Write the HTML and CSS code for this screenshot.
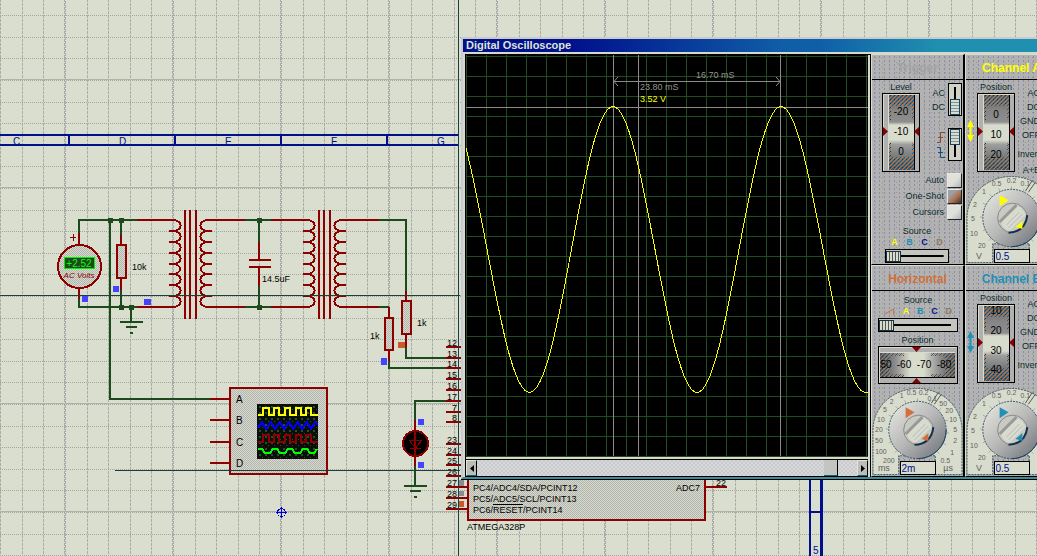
FILE: index.html
```html
<!DOCTYPE html>
<html lang="en">

<head>
    <meta charset="UTF-8">
    <meta name="viewport" content="width=device-width, initial-scale=1.0">
    <title>Digital Oscilloscope</title>
    <link rel="stylesheet" href="styles.css">
</head>

<body>
    <main class="workspace">
        <svg class="schematic" role="img" aria-label="Circuit schematic">
            <defs>
                <pattern id="sheetGrid" x="64" y="79" width="108" height="108" patternUnits="userSpaceOnUse">
                    <g class="grid-v">
                        <path d="M.5 0V108M23.5 0V108M44.5 0V108M66.5 0V108M87.5 0V108" />
                        <path d="M1.5 2V108" />
                    </g>
                    <path class="grid-solid" d="M0 .5H108" />
                    <path class="grid-h" d="M0 1.5H108M0 23.5H108M0 44.5H108M0 66.5H108M0 87.5H108" />
                </pattern>
                <pattern id="dither" width="2" height="2" patternUnits="userSpaceOnUse">
                    <rect width="2" height="2" fill="#d6dacb" />
                    <path d="M0 0h1v1h-1zM1 1h1v1h-1z" fill="#b4b4b0" />
                </pattern>
                <pattern id="smallGrid" x="257" y="404" width="6" height="6" patternUnits="userSpaceOnUse">
                    <rect width="6" height="6" fill="#0a0f0a" />
                    <path d="M2 2h2v2h-2zM5 5h1v1h-1z" fill="#245224" />
                </pattern>
                <g id="transformer">
                    <path class="pin" d="M137 220H173a7 5 0 0 1 0 11h-4m4 0a7 5 0 0 1 0 11h-4m4 0a7 5 0 0 1 0 11h-4m4 0a7 5 0 0 1 0 11h-4m4 0a7 5 0 0 1 0 10h-4m4 0a7 5 0 0 1 0 11h-4m4 0a7 5 0 0 1 0 11h-4m4 0a7 5 0 0 1 0 11H137" />
                    <path class="pin" d="M245 220H208a7 5 0 0 0 0 11h4m-4 0a7 5 0 0 0 0 11h4m-4 0a7 5 0 0 0 0 11h4m-4 0a7 5 0 0 0 0 11h4m-4 0a7 5 0 0 0 0 10h4m-4 0a7 5 0 0 0 0 11h4m-4 0a7 5 0 0 0 0 11h4m-4 0a7 5 0 0 0 0 11H245" />
                    <path class="pin" d="M185 210V319M190 210V319M196 210V319" />
                </g>
                <g id="ground">
                    <path class="wire" d="M0 0V15M-11 15H12M-5 20H6M-1 26H2" />
                </g>
            </defs>

            <rect width="100%" height="100%" fill="url(#sheetGrid)" />

            <!-- sheet border -->
            <path class="border" d="M0 135H459M0 145H459M69 135V145M175 135V145M281 135V145M387 135V145" />
            <path class="border" d="M810 470V556M810 512H821" />
            <path class="border thick" d="M821.5 470V556" />
            <g class="border-text">
                <text x="13" y="145">C</text>
                <text x="119" y="145">D</text>
                <text x="225" y="145">E</text>
                <text x="331" y="145">F</text>
                <text x="437" y="145">G</text>
                <text x="813" y="554">5</text>
            </g>

            <!-- wires -->
            <path class="wire" d="M79 234V220H137M110 220V399H210M121 220V236M121 290V307M79 299V307H137" />
            <path class="wire" d="M245 220H271M245 307H271M259 220V242M259 286V307" />
            <path class="wire" d="M379 220H406V292M406 347V358H446M379 307H389M389 361V368H446" />
            <path class="wire" d="M446 401H415V420M415 466V472" />
            <use href="#ground" x="131" y="307" />
            <use href="#ground" x="415" y="471" />
            <path class="node" d="M108 218h5v5h-5zM119 218h5v5h-5zM119 305h5v5h-5zM129 305h5v5h-5zM257 218h5v5h-5zM257 305h5v5h-5z" />

            <!-- transformers -->
            <use href="#transformer" />
            <use href="#transformer" x="134" />

            <!-- AC voltmeter -->
            <path class="pin" d="M79 233V245M79 288V299" />
            <path class="thin-pin" d="M70 237.5H76M73.5 234V241" />
            <circle class="part" cx="79.5" cy="266.5" r="21.5" />
            <rect class="meter-screen" x="64.5" y="257.5" width="30" height="11" />
            <text class="meter-value" x="79" y="267">+2.52</text>
            <text class="meter-unit" x="79" y="278">AC Volts</text>

            <!-- resistors and capacitor -->
            <path class="pin" d="M121 235V245M121 278V290M406 291V301M406 334V347M389 307V318M389 350V361" />
            <rect class="part" x="117" y="245" width="9" height="33" />
            <rect class="part" x="402" y="301" width="9" height="33" />
            <rect class="part" x="385" y="318" width="8" height="32" />
            <path class="pin" d="M259 242V260M249 260H271M249 267H271M259 267V286" />
            <g class="label">
                <text x="132" y="270">10k</text>
                <text x="262" y="282">14.5uF</text>
                <text x="370" y="339">1k</text>
                <text x="417" y="326">1k</text>
            </g>

            <!-- oscilloscope part -->
            <rect class="part" x="230" y="388" width="97" height="86" />
            <path class="pin" d="M210 399H230M210 420H230M210 442H230M210 463H230" />
            <rect x="257" y="404" width="61" height="55" fill="url(#smallGrid)" />
            <path class="trace yellow" d="M258 415H263V408H269V415H274V408H279V415H285V408H290V415H296V408H301V415H306V408H311V415H318" />
            <path class="trace blue" d="M258 428L262 422L266 429L271 422L275 429L280 422L284 429L289 422L293 429L298 422L302 429L307 422L311 429L315 422L318 425" />
            <path class="trace red" d="M258 442H263V435H269V442H274V435H279V442H285V435H290V442H296V435H301V442H306V435H311V442H318" />
            <path class="trace green" d="M258 449L262 449L265 453L270 453L273 449L277 449L280 453L285 453L288 449L292 449L295 453L300 453L303 449L307 449L310 453L314 453L317 449" />
            <g class="label pin-name">
                <text x="236" y="403">A</text>
                <text x="236" y="424">B</text>
                <text x="236" y="446">C</text>
                <text x="236" y="467">D</text>
            </g>

            <!-- LED -->
            <circle class="led" cx="415.5" cy="443.5" r="12.5" />
            <path class="pin" d="M415 420V466" />
            <path class="led-mark" d="M409 440H422L415.5 448ZM410 448.5H421" />

            <!-- microcontroller -->
            <rect class="part" x="468" y="340" width="237" height="180" />
            <path class="pin" d="M446 347H468M446 358H468M446 368H468M446 379H468M446 390H468M446 401H468M446 412H468M446 422H468M446 444H468M446 455H468M446 465H468M446 476H468M446 487H468M446 498H468M446 509H468M705 487H727" />
            <g class="label pin-number">
                <text x="457" y="346">12</text>
                <text x="457" y="357">13</text>
                <text x="457" y="367">14</text>
                <text x="457" y="378">15</text>
                <text x="457" y="389">16</text>
                <text x="457" y="400">17</text>
                <text x="457" y="411">7</text>
                <text x="457" y="421">8</text>
                <text x="457" y="443">23</text>
                <text x="457" y="454">24</text>
                <text x="457" y="464">25</text>
                <text x="457" y="475">26</text>
                <text x="457" y="486">27</text>
                <text x="457" y="497">28</text>
                <text x="457" y="508">29</text>
                <text x="726" y="486">22</text>
            </g>
            <g class="label">
                <text x="473" y="491">PC4/ADC4/SDA/PCINT12</text>
                <text x="473" y="502">PC5/ADC5/SCL/PCINT13</text>
                <text x="473" y="513">PC6/RESET/PCINT14</text>
                <text x="676" y="491">ADC7</text>
                <text x="467" y="530">ATMEGA328P</text>
            </g>
            <path class="overline" d="M493 504.5H523" />

            <!-- logic state markers -->
            <path class="state-low" d="M113 286h6v6h-6zM82 296h6v6h-6zM144 299h7v6h-7zM381 358h6v7h-6zM418 419h6v6h-6zM418 462h6v6h-6z" />
            <path class="state-high" d="M398 342h7v6h-7zM459 501h5v6h-5z" />
            <path class="state-float" d="M459 480h5v6h-5zM459 491h5v5h-5z" />

            <!-- origin -->
            <g class="origin">
                <circle cx="281.5" cy="512.5" r="4" />
                <path d="M276 512.5H287M281.5 507V518" />
            </g>

            <!-- cursor crosshair -->
            <path class="crosshair" d="M0 295.5H460M115 470.5H460M458.5 0V556" />
        </svg>

        <section class="window">
            <h1 class="title-bar">Digital Oscilloscope</h1>
            <div class="window-body">
                <div class="scope">
                    <svg class="screen" role="img" aria-label="Waveform display">
                        <defs>
                            <pattern id="scopeGrid" width="20" height="20" patternUnits="userSpaceOnUse">
                                <path d="M.5 0V20M0 1.5H20" stroke="#1f4d1f" />
                            </pattern>
                        </defs>
                        <rect width="100%" height="100%" fill="url(#scopeGrid)" />
                        <path class="cursor" d="M147.5 0V402M172.5 0V402M314.5 0V402M0 52.5H402M148 26.5H314M152 22L148 26.5L152 31M310 22L314 26.5L310 31" />
                        <path class="wave" d="M-21 51.5C9.6 51.5 32.4 337.5 63.5 337.5S116.4 51.5 147 51.5S200.4 337.5 231 337.5S284.4 51.5 315 51.5S368.4 337.5 399.5 337.5S452 51.5 483 51.5" />
                        <text class="reading" x="230" y="23">16.70 mS</text>
                        <text class="reading" x="174" y="35">23.80 mS</text>
                        <text class="reading volts" x="174" y="47">3.52 V</text>
                    </svg>
                    <div class="scrollbar">
                        <button type="button" aria-label="Scroll left"><svg viewBox="0 0 4 7"><path d="M4 0V7L0 3.5Z" /></svg></button>
                        <div class="track"><span class="thumb"></span></div>
                        <button type="button" aria-label="Scroll right"><svg viewBox="0 0 4 7"><path d="M0 0V7L4 3.5Z" /></svg></button>
                    </div>
                </div>

                <svg class="shared" aria-hidden="true">
                    <defs>
                        <linearGradient id="drumV" x2="0" y2="1">
                            <stop offset="0" stop-color="#555f62" />
                            <stop offset=".2" stop-color="#858585" />
                            <stop offset=".36" stop-color="#8e8e8e" />
                            <stop offset=".4" stop-color="#d8dccd" />
                            <stop offset=".6" stop-color="#d8dccd" />
                            <stop offset=".66" stop-color="#9e9e9e" />
                            <stop offset="1" stop-color="#4b5558" />
                        </linearGradient>
                        <linearGradient id="drumH">
                            <stop offset="0" stop-color="#4b5558" />
                            <stop offset=".2" stop-color="#8b8b8b" />
                            <stop offset=".4" stop-color="#d8dccd" />
                            <stop offset=".58" stop-color="#d8dccd" />
                            <stop offset=".8" stop-color="#8b8b8b" />
                            <stop offset="1" stop-color="#4b5558" />
                        </linearGradient>
                        <linearGradient id="knob" x2="1" y2="1">
                            <stop offset=".1" stop-color="#e0e2da" />
                            <stop offset=".5" stop-color="#b8b8b8" />
                            <stop offset=".9" stop-color="#777b80" />
                        </linearGradient>
                        <pattern id="speckle" width="4" height="4" patternUnits="userSpaceOnUse">
                            <path d="M0 0h1v1h-1zM2 2h1v1h-1zM3 1h1v1h-1zM1 3h1v1h-1z" fill="#c8703c" />
                            <path d="M1 1h1v1h-1zM3 3h1v1h-1zM2 0h1v1h-1z" fill="#14609c" />
                            <path d="M0 2h1v1h-1z" fill="#1c3c24" />
                        </pattern>
                        <symbol id="drum" viewBox="0 0 38 79">
                            <rect class="drum-frame" x=".5" y=".5" width="37" height="78" />
                            <path d="M1.5 78V1.5H37M6.500 2V77" fill="none" stroke="#d8dccd" />
                            <rect x="7" y="2" width="25" height="75" fill="url(#drumV)" />
                            <path d="M7 2h25v11h-25zM7 64h25v13h-25zM7 13h2v14h-2zM7 50h2v14h-2zM30 13h2v14h-2zM30 50h2v14h-2z" fill="url(#speckle)" />
                            <path d="M32.5 2V77" stroke="#000" />
                            <path d="M1 34V43L6 38.5ZM37 34V43L32 38.5Z" fill="#880000" />
                        </symbol>
                        <symbol id="knobBase" viewBox="0 0 92 90">
                            <path d="M1 89V44a45 42 0 0 1 90 0V89H64V70H27V89Z" fill="#d8dccd" stroke="#3e5e5e" stroke-dasharray="2 1" />
                            <path d="M46 43L33 14M46 43L24 20M46 43L17 29M46 43L14 43M46 43L17 57M46 43L23 67M46 43V12M46 43L59 14M46 43L70 22M46 43L77 34M46 43L78 47M46 43L75 59M46 43L68 68" stroke="#aaa" />
                            <path d="M60 17L67 6M63 18L70 8" stroke="#555" />
                            <circle cx="46" cy="44" r="29" fill="url(#knob)" stroke="#3f5363" stroke-dasharray="2 1" />
                            <path d="M46 73A29 29 0 0 0 75 44" fill="none" stroke="#17425a" />
                            <circle cx="47" cy="44" r="15" fill="#c8cac4" stroke="#888" />
                            <path d="M35 46L49 31Q57 33 60 41L44 57Q36 54 35 46Z" fill="#d8dccd" />
                            <path d="M34 48L51 31" stroke="#999" stroke-width="3" />
                            <path d="M41 51L54 38M43 54L57 40" stroke="#b4b4c8" />
                            <path d="M43 59Q60 58 62 41" fill="none" stroke="#14314a" stroke-width="2" />
                            <path d="M34 21L43 26L34 32Z" fill="currentColor" />
                            <path d="M57 47V55L50 53Z" fill="currentColor" />
                        </symbol>
                        <symbol id="voltDial" viewBox="0 0 92 90">
                            <use href="#knobBase" width="92" height="90" />
                            <g class="dial-text">
                                <text x="31" y="12">0.5</text>
                                <text x="46" y="9">0.2</text>
                                <text x="60" y="12">0.1</text>
                                <text x="18" y="20">1</text>
                                <text x="9" y="33">2</text>
                                <text x="7" y="47">5</text>
                                <text x="8" y="62">10</text>
                                <text x="16" y="74">20</text>
                                <text class="dial-unit" x="13" y="85">V</text>
                            </g>
                        </symbol>
                    </defs>
                </svg>

                <div class="panels">
                    <section class="panel">
                        <h2 class="trigger">Trigger</h2>
                        <div class="controls">
                            <div class="drum-col">
                                <span>Level</span>
                                <svg class="drum" viewBox="0 0 38 79">
                                    <use href="#drum" width="38" height="79" />
                                    <text x="19" y="22">-20</text>
                                    <text x="19" y="42">-10</text>
                                    <text x="19" y="62">0</text>
                                </svg>
                            </div>
                            <div class="switches">
                                <label class="switch"><span>AC<br>DC</span><input type="range" min="0" max="1" value="0"></label>
                                <label class="switch" aria-label="Trigger edge">
                                    <svg class="edges" viewBox="0 0 8 28">
                                        <path d="M0 11.5H3.5V1.5H8M1 6.500H6" stroke="#8c4a2c" />
                                        <path d="M0 16.5H3.5V26.5H8M1 21.500H6" stroke="#14507c" />
                                    </svg>
                                    <input type="range" min="0" max="1" value="1">
                                </label>
                            </div>
                        </div>
                        <div class="modes">
                            <label for="auto">Auto</label><button type="button" id="auto"></button>
                            <label for="oneShot">One-Shot</label><button type="button" id="oneShot" class="lit"></button>
                            <label for="cursors">Cursors</label><button type="button" id="cursors"></button>
                        </div>
                        <div class="source">
                            <label for="triggerSource">Source</label>
                            <div class="channels">
                                <b class="a">A</b><b class="b">B</b><b class="c">C</b><b class="d">D</b>
                            </div>
                            <input class="slider" id="triggerSource" type="range" min="0" max="3" value="0">
                        </div>
                    </section>

                    <section class="panel">
                        <h2 class="a">Channel A</h2>
                        <div class="controls">
                            <svg class="arrows a" viewBox="0 0 7 22"><path d="M3.5 0L7 7H4.5V15H7L3.5 22L0 15H2.5V7H0Z" /></svg>
                            <div class="drum-col">
                                <span>Position</span>
                                <svg class="drum" viewBox="0 0 38 79">
                                    <use href="#drum" width="38" height="79" />
                                    <text x="19" y="25">0</text>
                                    <text x="19" y="45">10</text>
                                    <text x="19" y="65">20</text>
                                </svg>
                            </div>
                            <div class="coupling">
                                <span>AC</span><span>DC</span><span>GND</span><span>OFF</span>
                                <span class="extra">Invert</span><span>A+B</span>
                            </div>
                        </div>
                        <div class="dial a">
                            <svg viewBox="0 0 92 90"><use href="#voltDial" width="92" height="90" /></svg>
                            <input type="text" value="0.5" aria-label="Channel A volts per division">
                        </div>
                    </section>

                    <section class="panel">
                        <h2 class="h">Horizontal</h2>
                        <div class="source wide">
                            <label for="timeSource">Source</label>
                            <div class="channels">
                                <svg class="ramp" viewBox="0 0 11 7"><path d="M0 6.5L9.5 1V7" /></svg>
                                <b class="a">A</b><b class="b">B</b><b class="c">C</b><b class="d">D</b>
                            </div>
                            <input class="slider" id="timeSource" type="range" min="0" max="4" value="0">
                        </div>
                        <div class="time-position">
                            <span>Position</span>
                            <svg class="drum-wide" viewBox="0 0 80 38">
                                <rect class="drum-frame" x=".5" y=".5" width="79" height="37" />
                                <path d="M1.5 37V1.5H79M2 6.500H77" fill="none" stroke="#d8dccd" />
                                <rect x="2" y="7" width="75" height="24" fill="url(#drumH)" />
                                <path d="M2 7h10v24h-10zM67 7h10v24h-10zM12 7h14v3h-14zM53 7h14v3h-14zM12 28h14v3h-14zM53 28h14v3h-14z" fill="url(#speckle)" />
                                <path d="M2 31.5H77" stroke="#000" />
                                <path d="M34 1H43L38.5 6ZM34 37H43L38.5 32Z" fill="#880000" />
                                <text x="8" y="22">50</text>
                                <text x="26" y="22">-60</text>
                                <text x="46" y="22">-70</text>
                                <text x="66" y="22">-80</text>
                            </svg>
                        </div>
                        <div class="dial h">
                            <svg viewBox="0 0 92 90">
                                <use href="#knobBase" width="92" height="90" />
                                <g class="dial-text">
                                    <text x="30" y="12">1</text>
                                    <text x="40" y="9">0.5</text>
                                    <text x="52" y="9">0.2</text>
                                    <text x="61" y="15">0.1</text>
                                    <text x="72" y="20">50</text>
                                    <text x="78" y="27">20</text>
                                    <text x="82" y="36">10</text>
                                    <text x="84" y="46">5</text>
                                    <text x="84" y="57">2</text>
                                    <text x="81" y="69">1</text>
                                    <text x="74" y="77">0.5</text>
                                    <text x="20" y="18">2</text>
                                    <text x="13" y="26">5</text>
                                    <text x="9" y="36">10</text>
                                    <text x="7" y="46">20</text>
                                    <text x="7" y="57">50</text>
                                    <text x="9" y="68">100</text>
                                    <text x="17" y="77">200</text>
                                    <text class="dial-unit" x="12" y="85">ms</text>
                                    <text class="dial-unit" x="77" y="85">µs</text>
                                </g>
                            </svg>
                            <input type="text" value="2m" aria-label="Time per division">
                        </div>
                    </section>

                    <section class="panel">
                        <h2 class="b">Channel B</h2>
                        <div class="controls">
                            <svg class="arrows b" viewBox="0 0 7 22"><path d="M3.5 0L7 7H4.5V15H7L3.5 22L0 15H2.5V7H0Z" /></svg>
                            <div class="drum-col">
                                <span>Position</span>
                                <svg class="drum" viewBox="0 0 38 79">
                                    <use href="#drum" width="38" height="79" />
                                    <text x="19" y="10">10</text>
                                    <text x="19" y="30">20</text>
                                    <text x="19" y="50">30</text>
                                    <text x="19" y="69">40</text>
                                </svg>
                            </div>
                            <div class="coupling">
                                <span>AC</span><span>DC</span><span>GND</span><span>OFF</span>
                                <span class="extra">Invert</span>
                            </div>
                        </div>
                        <div class="dial b">
                            <svg viewBox="0 0 92 90"><use href="#voltDial" width="92" height="90" /></svg>
                            <input type="text" value="0.5" aria-label="Channel B volts per division">
                        </div>
                    </section>
                </div>
            </div>
        </section>
    </main>
</body>

</html>
```
FILE: styles.css
```css
* {
    box-sizing: border-box;
    margin: 0;
    padding: 0;
}

body {
    font-family: "Liberation Sans", Arial, sans-serif;
    font-size: 9px;
    line-height: 12px;
    color: #0c2c2c;
    background-color: #dadece;
    overflow: hidden;
}

.workspace {
    position: relative;
    height: 100vh;
    overflow: hidden;
}

/* schematic */
.schematic {
    display: block;
    width: 100%;
    height: 100%;
}

.schematic path,
.schematic circle,
.schematic rect {
    shape-rendering: crispEdges;
}

.grid-v {
    stroke: #acaca8;
    stroke-dasharray: 3 1;
}

.grid-h {
    stroke: #a4a4a0;
    stroke-dasharray: 1 1;
}

.grid-solid {
    stroke: #b0b0ac;
}

.border {
    fill: none;
    stroke: #00108c;
    stroke-width: 2;
}

.border.thick {
    stroke-width: 3;
}

.border-text {
    font-size: 10px;
    fill: #00108c;
}

.wire {
    fill: none;
    stroke: #1c4a1c;
    stroke-width: 2;
}

.pin {
    fill: none;
    stroke: #8c0000;
    stroke-width: 2;
}

.thin-pin {
    stroke: #8c0000;
}

.node {
    fill: #1c4a1c;
}

.part {
    fill: url(#dither);
    stroke: #8c0000;
    stroke-width: 2;
}

.meter-screen {
    fill: #1c4a1c;
    stroke: #00f000;
}

.meter-value {
    font-size: 10px;
    fill: #00ff00;
    text-anchor: middle;
}

.meter-unit {
    font-size: 8px;
    font-style: italic;
    fill: #8c0000;
    text-anchor: middle;
}

.label {
    font-size: 9px;
    fill: #000;
}

.pin-name {
    font-size: 10px;
}

.pin-number {
    text-anchor: end;
}

.overline {
    stroke: #000;
}

.trace {
    fill: none;
    stroke-width: 2;
}

.yellow {
    stroke: #ff0;
}

.blue {
    stroke: #00f;
}

.red {
    stroke: #8c0000;
}

.green {
    stroke: #0f0;
}

.led {
    fill: #000;
    stroke: #8c0000;
    stroke-width: 2;
}

.led-mark {
    fill: none;
    stroke: #8c0000;
}

.state-low {
    fill: #4444ff;
}

.state-high {
    fill: #c85a2c;
}

.state-float {
    fill: #8c8c8c;
}

.origin {
    fill: none;
    stroke: #0000d0;
}

.crosshair {
    stroke: #1c4038;
}

/* oscilloscope window */
.window {
    position: absolute;
    top: 37px;
    left: 461px;
    right: -24px;
    background-color: #d6d8ce;
    border: 2px solid #c8cad0;
    border-bottom-color: #3c8c9c;
    box-shadow: 0 1px #000;
}

.title-bar {
    height: 13px;
    padding-left: 3px;
    font-size: 11px;
    line-height: 13px;
    color: #dfe3d6;
    background: linear-gradient(90deg, #00108c 18%, #0f5fa8 54%, #0f5fa8 60%, #2090b0 80%);
}

.window-body {
    display: flex;
    padding-top: 2px;
}

.scope {
    flex: 1;
    margin-left: 2px;
    padding-right: 2px;
    border: 1px solid #000;
    border-bottom: none;
}

.screen {
    display: block;
    width: 100%;
    height: 402px;
    background-color: #000;
    border-bottom: 1px solid #1f4d1f;
}

.cursor {
    fill: none;
    stroke: #8e8a86;
}

.wave {
    fill: none;
    stroke: #ff0;
    shape-rendering: crispEdges;
}

.reading {
    fill: #98948e;
}

.reading.volts {
    fill: #ff0;
}

.scrollbar {
    display: flex;
    height: 18px;
    margin-top: 2px;
    border-top: 1px solid #000;
    border-bottom: 1px solid #000;
}

.scrollbar button {
    width: 11px;
    border: 1px solid #e4e4dc;
    border-right-color: #000;
    border-bottom-color: #14607c;
    background-color: #bcbcb8;
}

.scrollbar button svg {
    display: block;
    width: 4px;
    height: 7px;
    margin: auto;
}

.track {
    flex: 1;
    padding-right: 19px;
    background: repeating-conic-gradient(#c8c8d8 0 25%, #d8dace 0 50%) 0 0 / 4px 4px;
}

.thumb {
    display: block;
    width: 14px;
    height: 100%;
    margin-left: auto;
    background-color: #c4c4c0;
    border-right: 1px solid #000;
    border-bottom: 1px solid #14607c;
}

.shared {
    width: 0;
    height: 0;
}

/* control panels */
.panels {
    display: grid;
    grid-template-columns: 94px 94px;
    grid-template-rows: 211px 212px;
}

.panel {
    display: flex;
    flex-direction: column;
    overflow: hidden;
    border-left: 1px solid #d8dccd;
    border-right: 2px solid #000;
    border-bottom: 1px solid #000;
    border-top: 1px solid #d8dccd;
    background-color: #b2b2b0;
    background-image: radial-gradient(circle, #8c8cb0 20%, transparent 24%), radial-gradient(circle, #94949c 14%, transparent 16%);
    background-size: 5px 4px, 7px 5px;
}

.panel h2 {
    flex: none;
    height: 25px;
    font-size: 12px;
    line-height: 26px;
    text-align: center;
    white-space: nowrap;
    border-bottom: 1px solid #000;
}

.panel h2.trigger {
    color: #a2a2a2;
}

.a {
    color: #ff0;
}

.b {
    color: #2090b4;
}

.c {
    color: #00108c;
}

.d {
    color: #8c7c5c;
}

.h {
    color: #d0703c;
}

.controls {
    flex: none;
    display: flex;
    height: 93px;
    padding: 1px 0 0 10px;
}

.drum-col {
    flex: none;
    display: flex;
    flex-direction: column;
    align-items: center;
    width: 38px;
}

.drum {
    width: 38px;
    height: 79px;
}

.drum-frame {
    fill: #b0b0b0;
    stroke: #000;
}

.drum text,
.drum-wide text {
    font-size: 10px;
    fill: #000;
    text-anchor: middle;
}

.switches {
    flex: 1;
    display: flex;
    flex-direction: column;
    gap: 12px;
    padding: 2px 1px 0 0;
}

.switch {
    display: flex;
    justify-content: flex-end;
    align-items: center;
    gap: 3px;
    height: 33px;
    line-height: 14px;
    text-align: right;
}

.switch input {
    flex: none;
    appearance: none;
    writing-mode: vertical-lr;
    direction: rtl;
    width: 14px;
    height: 33px;
    border: 1px solid #000;
    background: linear-gradient(#000, #000) center / 2px 25px no-repeat #d0d2c8;
}

.switch input::-webkit-slider-thumb {
    appearance: none;
    width: 10px;
    height: 16px;
    border: 1px solid #17425a;
    background: repeating-linear-gradient(#d8dccd 0 2px, #7a94a4 2px 3px);
}

.edges {
    flex: none;
    width: 8px;
    height: 28px;
    fill: none;
}

.modes {
    display: grid;
    grid-template-columns: 1fr 15px;
    grid-auto-rows: 15px;
    column-gap: 3px;
    row-gap: 1px;
    padding-right: 1px;
    text-align: right;
    line-height: 15px;
}

.modes button {
    border: 1px solid #e8e8e0;
    border-right-color: #222;
    border-bottom-color: #222;
    background: linear-gradient(135deg, #e0e2da 50%, #b0b4c4);
}

.modes button.lit {
    background: linear-gradient(135deg, #9aa0a4 30%, #b0704c 60%, #333);
}

.source {
    width: 64px;
    margin: 6px auto 0 13px;
    text-align: center;
}

.source label {
    display: block;
    line-height: 11px;
}

.channels {
    display: flex;
    justify-content: space-around;
    height: 12px;
    padding: 0 2px;
    line-height: 11px;
}

.slider {
    appearance: none;
    display: block;
    width: 100%;
    height: 14px;
    border: 1px solid #000;
    background: linear-gradient(#000, #000) center / 85% 2px no-repeat #c4c6be;
}

.slider::-webkit-slider-thumb {
    appearance: none;
    width: 15px;
    height: 11px;
    border: 1px solid #17323c;
    background: repeating-linear-gradient(90deg, #d8dccd 0 2px, #555 2px 3px);
}

.source.wide {
    width: 80px;
    margin: 4px auto 0 6px;
}

.ramp {
    width: 11px;
    height: 7px;
    margin-top: 2px;
    fill: none;
    stroke: #d0703c;
}

.time-position {
    display: flex;
    flex-direction: column;
    align-items: center;
    padding-top: 2px;
}

.drum-wide {
    width: 80px;
    height: 38px;
}

.arrows {
    flex: none;
    width: 7px;
    height: 22px;
    margin: 39px 3px 0 -9px;
    fill: currentColor;
}

.coupling {
    flex: 1;
    display: flex;
    flex-direction: column;
    padding: 5px 17px 0 0;
    align-items: flex-end;
    line-height: 14px;
}

.coupling .extra {
    padding: 5px 0 2px;
}

.dial {
    display: grid;
    margin-top: auto;
}

.dial svg,
.dial input {
    grid-area: 1 / 1;
}

.dial svg {
    width: 100%;
    height: 90px;
}

.dial input {
    width: 36px;
    height: 14px;
    margin-bottom: 1px;
    padding-left: 1px;
    place-self: end center;
    font-family: inherit;
    font-size: 10px;
    color: #00108c;
    border: 1px solid #000;
    background-color: #d8dccd;
}

.dial-text {
    font-size: 7px;
    fill: #606060;
    text-anchor: middle;
}

.dial-unit {
    font-size: 9px;
}
```
